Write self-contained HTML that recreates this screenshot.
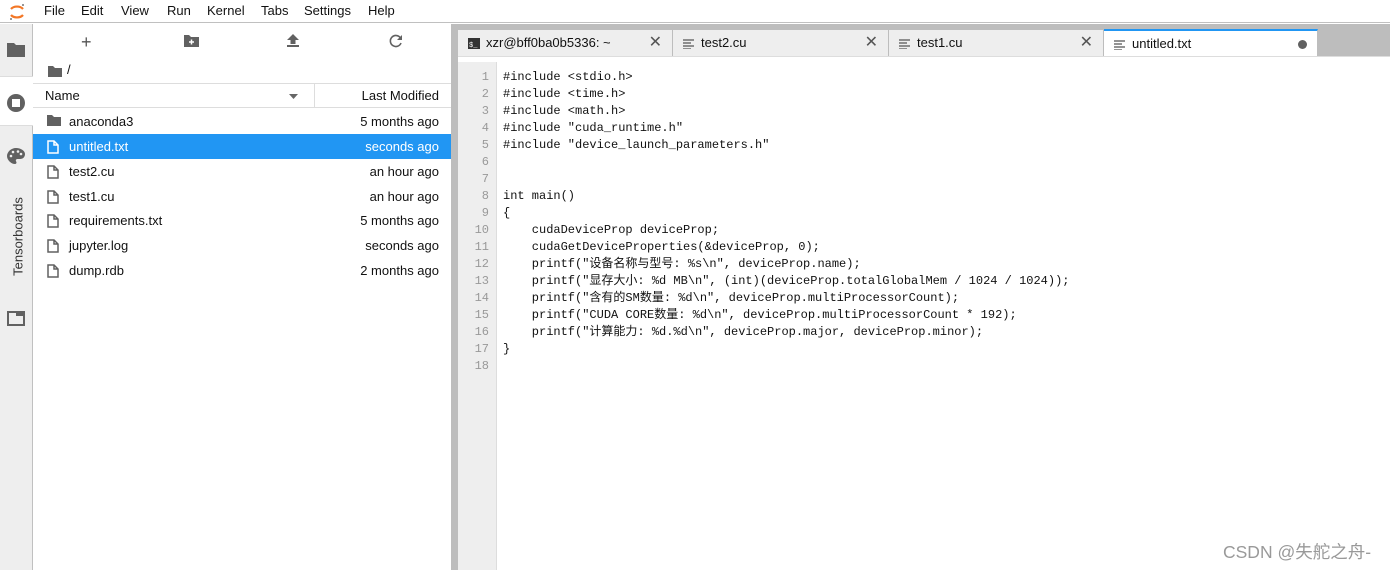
<!DOCTYPE html>
<html><head><meta charset="utf-8"><style>
*{box-sizing:border-box;margin:0;padding:0}
body{width:1390px;height:570px;overflow:hidden;background:#fff;font-family:"Liberation Sans","Noto Sans CJK SC",sans-serif;font-size:13px;color:#111;position:relative}
.abs{position:absolute}
.menu{left:0;top:0;width:1390px;height:23px;border-bottom:1px solid #c0c0c0;background:#fff}
.menu span{position:absolute;top:3px;font-size:13px}
.side{left:0;top:24px;width:33px;height:546px;background:#eee;border-right:1px solid #c0c0c0}
.fp{left:33px;top:24px;width:418px;height:546px;background:#fff}
.split{left:451px;top:24px;width:7px;height:546px;background:#bdbdbd}
.row{position:absolute;left:0;width:418px;height:25px;line-height:25px}
.row .n{position:absolute;left:36px}
.row .d{position:absolute;right:12px}
.row svg{position:absolute;left:14px;top:6px}
.tabs{left:458px;top:24px;width:932px;height:32px;background:#bdbdbd}
.tab{position:absolute;top:6px;height:26px;background:#eee;border-right:1px solid #bdbdbd;line-height:26px}
.tab .t{position:absolute;left:28px;font-size:13px}
.tab .x{position:absolute;right:10px;top:0;font-size:16px;color:#555}
.ed{left:458px;top:56px;width:932px;height:514px;background:#fff;border-top:1px solid #ddd}
.gut{left:458px;top:62px;width:39px;height:508px;background:#eee;border-right:1px solid #ddd}
.code{font-family:"Liberation Mono","Noto Sans CJK SC",monospace;font-size:12px;line-height:17px;white-space:pre}
</style></head><body>
<div class="abs menu">
<svg class="abs" style="left:8px;top:2px" width="18" height="20"><path d="M3 7 A7 5 0 0 1 15 7" stroke="#f37726" stroke-width="2.2" fill="none"/><path d="M3 13 A7 5 0 0 0 15 13" stroke="#f37726" stroke-width="2.2" fill="none"/><circle cx="15" cy="3" r="1" fill="#767677"/><circle cx="3" cy="17" r="1" fill="#767677"/></svg>
<span style="left:44px">File</span><span style="left:81px">Edit</span><span style="left:121px">View</span><span style="left:167px">Run</span><span style="left:207px">Kernel</span><span style="left:261px">Tabs</span><span style="left:304px">Settings</span><span style="left:368px">Help</span>
</div>
<div class="abs side">
<svg class="abs" style="left:7px;top:18px" width="18" height="15"><path d="M0 1h7l2 2h9v12H0z" fill="#616161"/></svg>
<div class="abs" style="left:0;top:52px;width:33px;height:50px;background:#fff;border-top:1px solid #ddd;border-bottom:1px solid #ddd"></div>
<svg class="abs" style="left:6px;top:69px" width="20" height="20"><circle cx="10" cy="10" r="9" fill="#616161"/><rect x="6" y="6" width="8" height="8" fill="#fff"/></svg>
<svg class="abs" style="left:7px;top:124px" width="18" height="16"><path d="M9 0C4 0 0 4 0 8s4 8 8 8c1 0 1.5-.7 1.5-1.5 0-.8-.7-1.2-.7-2 0-.8.7-1.5 1.5-1.5H13c3 0 5-2 5-5C18 3 14 0 9 0z" fill="#616161"/><circle cx="4" cy="8" r="1.3" fill="#eee"/><circle cx="6" cy="4" r="1.3" fill="#eee"/><circle cx="11" cy="3.5" r="1.3" fill="#eee"/><circle cx="14" cy="6" r="1.3" fill="#eee"/></svg>
<div class="abs" style="left:-32px;top:205px;width:100px;transform:rotate(-90deg);text-align:center;font-size:13px;color:#333">Tensorboards</div>
<svg class="abs" style="left:7px;top:287px" width="18" height="15"><rect x="1" y="1" width="16" height="13" fill="none" stroke="#616161" stroke-width="2"/><rect x="9" y="1" width="8" height="4" fill="#616161"/></svg>
</div>
<div class="abs fp">
<div class="abs" style="left:48px;top:8px;font-size:18px;color:#555">+</div>
<svg class="abs" style="left:151px;top:11px" width="15" height="12"><path d="M0 0h5l2 2h8v10H0z" fill="#616161"/><path d="M7.5 4.5v5M5 7h5" stroke="#fff" stroke-width="1.5"/></svg>
<svg class="abs" style="left:254px;top:10px" width="12" height="13"><path d="M6 0L0 6h3.5v4h5V6H12z" fill="#616161"/><rect x="0" y="11" width="12" height="2" fill="#616161"/></svg>
<svg class="abs" style="left:356px;top:10px" width="14" height="14"><path d="M11.5 4A5.5 5.5 0 1 0 12 9" stroke="#616161" stroke-width="1.6" fill="none"/><path d="M13 1v5H8z" fill="#616161"/></svg>
<svg class="abs" style="left:15px;top:42px" width="14" height="11"><path d="M0 0h5l2 2h7v9H0z" fill="#616161"/></svg>
<div class="abs" style="left:34px;top:38px">/</div>
<div class="abs" style="left:0;top:59px;width:418px;height:25px;border-top:1px solid #ddd;border-bottom:1px solid #ddd;line-height:24px">
<span class="abs" style="left:12px">Name</span>
<svg class="abs" style="left:256px;top:10px" width="9" height="5"><path d="M0 0h9L4.5 5z" fill="#666"/></svg>
<div class="abs" style="left:281px;top:0;height:24px;border-left:1px solid #ddd"></div>
<span class="abs" style="right:12px">Last Modified</span>
</div>
<div class="row" style="top:85px"><svg width="14" height="11"><path d="M0 0h5l2 2h7v9H0z" fill="#616161"/></svg><span class="n">anaconda3</span><span class="d">5 months ago</span></div>
<div class="row" style="top:110px;background:#2196f3;color:#fff"><svg width="12" height="14"><path d="M1 1h6l4 4v8H1z M7 1v4h4" fill="none" stroke="#fff" stroke-width="1.5"/></svg><span class="n">untitled.txt</span><span class="d">seconds ago</span></div>
<div class="row" style="top:135px"><svg width="12" height="14"><path d="M1 1h6l4 4v8H1z M7 1v4h4" fill="none" stroke="#616161" stroke-width="1.5"/></svg><span class="n">test2.cu</span><span class="d">an hour ago</span></div>
<div class="row" style="top:160px"><svg width="12" height="14"><path d="M1 1h6l4 4v8H1z M7 1v4h4" fill="none" stroke="#616161" stroke-width="1.5"/></svg><span class="n">test1.cu</span><span class="d">an hour ago</span></div>
<div class="row" style="top:184px"><svg width="12" height="14"><path d="M1 1h6l4 4v8H1z M7 1v4h4" fill="none" stroke="#616161" stroke-width="1.5"/></svg><span class="n">requirements.txt</span><span class="d">5 months ago</span></div>
<div class="row" style="top:209px"><svg width="12" height="14"><path d="M1 1h6l4 4v8H1z M7 1v4h4" fill="none" stroke="#616161" stroke-width="1.5"/></svg><span class="n">jupyter.log</span><span class="d">seconds ago</span></div>
<div class="row" style="top:234px"><svg width="12" height="14"><path d="M1 1h6l4 4v8H1z M7 1v4h4" fill="none" stroke="#616161" stroke-width="1.5"/></svg><span class="n">dump.rdb</span><span class="d">2 months ago</span></div>
</div>
<div class="abs split"></div>
<div class="abs tabs">
<div class="tab" style="left:0;width:215px"><svg class="abs" style="left:10px;top:8px" width="12" height="11"><rect width="12" height="11" fill="#333"/><text x="1" y="9" font-size="7" fill="#fff" font-family="Liberation Mono">$_</text></svg><span class="t">xzr@bff0ba0b5336: ~</span><span class="x">✕</span></div>
<div class="tab" style="left:215px;width:216px"><svg class="abs" style="left:10px;top:9px" width="11" height="10"><path d="M0 1h11M0 4h8M0 7h11M0 10h8" stroke="#555" stroke-width="1.2"/></svg><span class="t">test2.cu</span><span class="x">✕</span></div>
<div class="tab" style="left:431px;width:215px"><svg class="abs" style="left:10px;top:9px" width="11" height="10"><path d="M0 1h11M0 4h8M0 7h11M0 10h8" stroke="#555" stroke-width="1.2"/></svg><span class="t">test1.cu</span><span class="x">✕</span></div>
<div class="tab" style="left:646px;width:214px;background:#fff;border-top:2px solid #2196f3;top:5px;height:27px"><svg class="abs" style="left:10px;top:9px" width="11" height="10"><path d="M0 1h11M0 4h8M0 7h11M0 10h8" stroke="#555" stroke-width="1.2"/></svg><span class="t">untitled.txt</span><span class="abs" style="right:10px;top:9px;width:9px;height:9px;border-radius:50%;background:#616161"></span></div>
</div>
<div class="abs ed"></div>
<div class="abs gut"></div>
<div class="abs code" style="left:458px;top:69px;width:31px;text-align:right;color:#999">1
2
3
4
5
6
7
8
9
10
11
12
13
14
15
16
17
18</div>
<div class="abs code" style="left:503px;top:69px;color:#111">#include &lt;stdio.h&gt;
#include &lt;time.h&gt;
#include &lt;math.h&gt;
#include "cuda_runtime.h"
#include "device_launch_parameters.h"


int main()
{
    cudaDeviceProp deviceProp;
    cudaGetDeviceProperties(&amp;deviceProp, 0);
    printf("设备名称与型号: %s\n", deviceProp.name);
    printf("显存大小: %d MB\n", (int)(deviceProp.totalGlobalMem / 1024 / 1024));
    printf("含有的SM数量: %d\n", deviceProp.multiProcessorCount);
    printf("CUDA CORE数量: %d\n", deviceProp.multiProcessorCount * 192);
    printf("计算能力: %d.%d\n", deviceProp.major, deviceProp.minor);
}
</div>
<div class="abs" style="left:1223px;top:539px;font-size:17.5px;color:#999">CSDN @失舵之舟-</div>
</body></html>
